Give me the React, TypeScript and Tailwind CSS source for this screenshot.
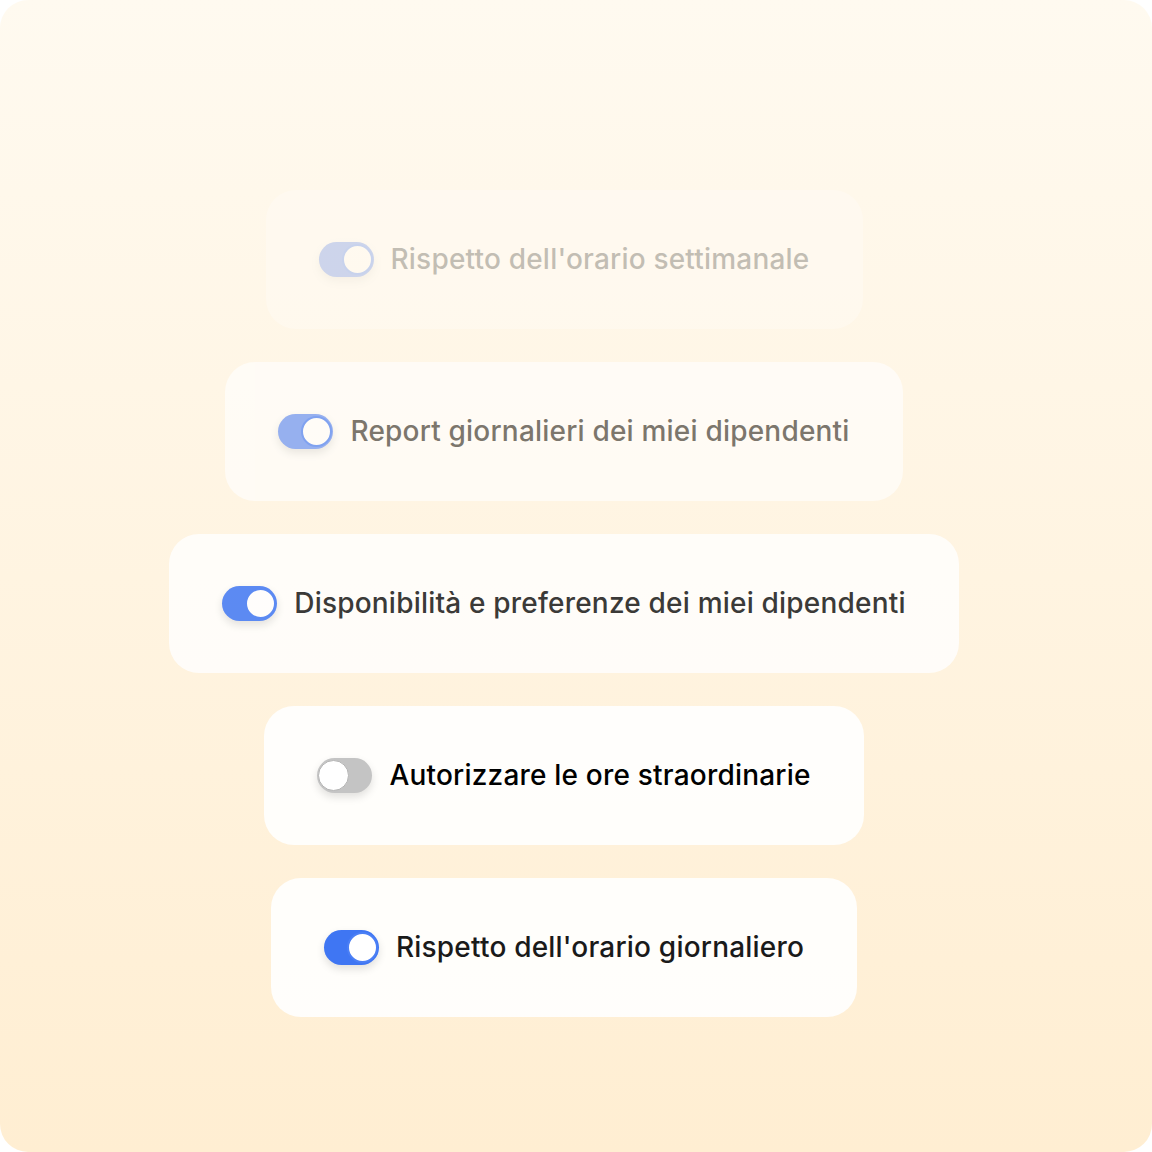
import React from "react";

type Row = {
  label: string;
  on: boolean;
  fade: string;
  text: string;
  track: string;
};

const rows: Row[] = [
  { label: "Rispetto dell'orario settimanale", on: true, fade: "opacity-30", text: "text-[#3a3a3a]", track: "bg-[#5b86f0]" },
  { label: "Report giornalieri dei miei dipendenti", on: true, fade: "opacity-70", text: "text-[#45413a]", track: "bg-[#6b93f4]" },
  { label: "Disponibilità e preferenze dei miei dipendenti", on: true, fade: "opacity-90", text: "text-[#262626]", track: "bg-[#4b7ff5]" },
  { label: "Autorizzare le ore straordinarie", on: false, fade: "opacity-100", text: "text-black", track: "bg-[#c4c4c4]" },
  { label: "Rispetto dell'orario giornaliero", on: true, fade: "opacity-100", text: "text-[#1a1a1a]", track: "bg-[#3f76f3]" },
];

function Toggle({ on, track }: { on: boolean; track: string }) {
  return (
    <div
      className={`relative h-[35px] w-[55px] shrink-0 rounded-full ${track} shadow-[0_4px_8px_rgba(0,0,0,0.12)]`}
    >
      <div
        className={`absolute top-[2px] h-[31px] w-[31px] rounded-full bg-white ${
          on ? "right-[1px] border-2 border-[#4b7ff5]" : "left-[1px] border border-[#b5b5b5]"
        }`}
      />
    </div>
  );
}

export default function App() {
  return (
    <div className="h-[1152px] w-[1152px] bg-white">
      <div className="flex h-full w-full flex-col items-center gap-[33px] rounded-[28px] bg-gradient-to-b from-[#fffaf0] to-[#ffeed2] pr-[24px] pt-[190px]">
        {rows.map((r) => (
          <div
            key={r.label}
            className={`flex items-center gap-[17px] rounded-[30px] bg-white/90 px-[53px] py-[52px] ${r.fade}`}
          >
            <Toggle on={r.on} track={r.track} />
            <span
              className={`text-[28px] font-medium leading-[35px] tracking-[0.2px] whitespace-nowrap ${r.text}`}
              style={{ fontFamily: "Inter, 'Noto Sans', sans-serif" }}
            >
              {r.label}
            </span>
          </div>
        ))}
      </div>
    </div>
  );
}
